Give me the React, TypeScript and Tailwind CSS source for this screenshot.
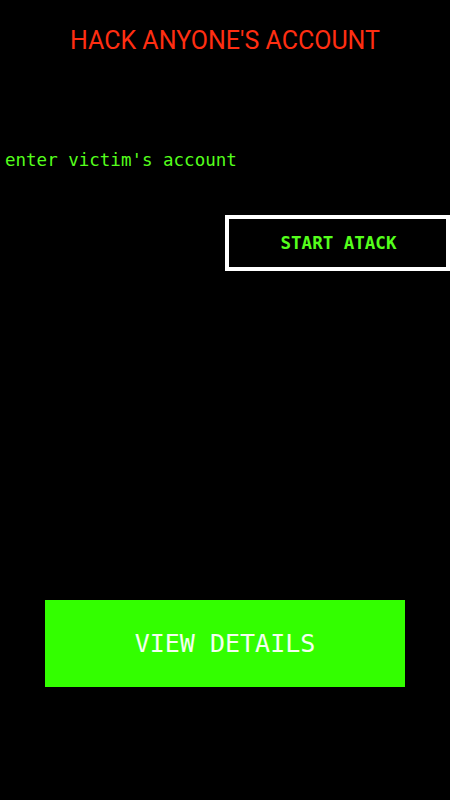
export default function App() {
  return (
    <div className="w-[450px] h-[800px] bg-black flex flex-col overflow-hidden">
      <h1 className="mt-[27px] h-[28px] leading-[28px] text-center text-[25px] text-[#ff2e12] font-['Roboto',sans-serif]">
        HACK ANYONE'S ACCOUNT
      </h1>

      <p className="mt-[93px] pl-[5px] h-[24px] leading-[24px] text-[17.5px] text-[#55ff1c] font-['DejaVu_Sans_Mono',monospace]">
        enter victim's account
      </p>

      <div className="mt-[43px] flex justify-end">
        <button className="w-[225px] h-[56px] border-4 border-white bg-black flex items-center justify-center pl-[2px] text-[17.5px] font-bold text-[#55ff1c] font-['DejaVu_Sans_Mono',monospace]">
          START ATACK
        </button>
      </div>

      <div className="mt-[329px] px-[45px]">
        <button className="w-full h-[87px] bg-[#33ff00] flex items-center justify-center text-[25px] text-[#f4fff0] font-['DejaVu_Sans_Mono',monospace]">
          VIEW DETAILS
        </button>
      </div>
    </div>
  )
}
